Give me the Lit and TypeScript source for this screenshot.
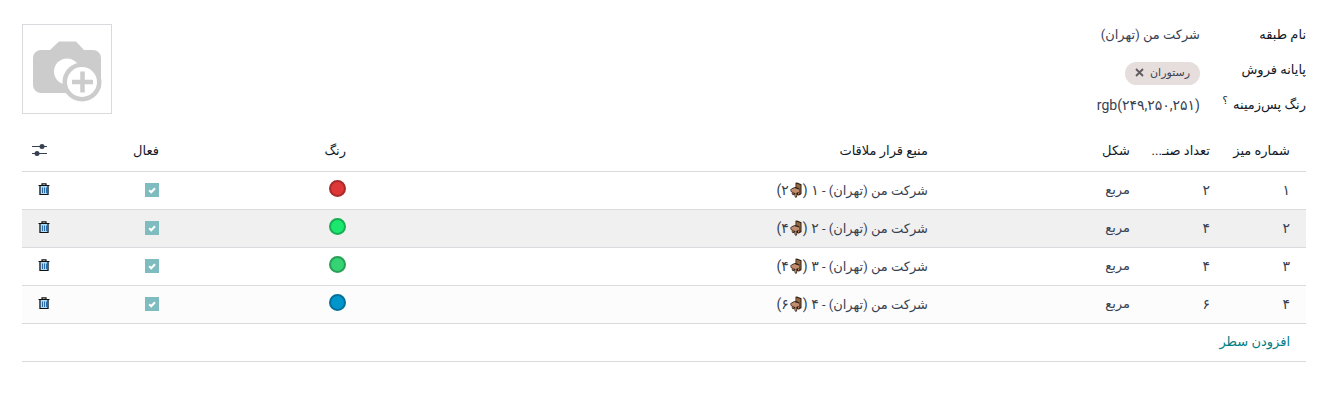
import { LitElement, html, css, svg } from "lit";
import { customElement, state } from "lit/decorators.js";

interface TableRow {
  id: number;
  number: string;
  seats: string;
  shape: string;
  fill: string;
  ring: string;
}

const chair = svg`<svg class="chair" viewBox="0 0 12 16" aria-label="صندلی" role="img">
    <path d="M5.500.8 7 .5l4.500 1.800V12l-2 1.200-1 .3-1.200-.6-.3 2.300-1.500.6-1-1.500V12.600L3 13.200 1.800 12V10.300L.5 9.300V7.200l3-1.700 2-.6z" fill="#2a1c12" />
    <path d="M6.300 1.500 10.500 3v8.200l-1.100.4V6.400L6.300 5.200z" fill="#946a42" />
    <path d="M1.200 7.600 4.400 5.900l4.700 1.500v2.300L5.500 11.300 1.200 9.200z" fill="#c38e70" />
    <path d="M4.800 11.200h1.700v3.500H5.200zM2.400 10.300h1.200v1.900H2.400zM8 10.400h1.200v2H8z" fill="#b5805f" />
  </svg>`;

@customElement("app-root")
export class AppRoot extends LitElement {
  static styles = css`
    :host {
      display: block;
      direction: rtl;
      padding: 24px 24px 24px 22px;
      background: #fff;
      color: #374151;
      font-family: Roboto, "DejaVu Sans", sans-serif;
      font-size: 13px;
      line-height: 20px;
    }
    .top {
      display: flex;
      justify-content: space-between;
      align-items: flex-start;
    }
    .fields {
      display: grid;
      grid-template-columns: 90px minmax(0, 240px);
      column-gap: 16px;
      row-gap: 15px;
      align-items: center;
      padding-top: 1px;
    }
    label,
    .label {
      color: #111827;
      white-space: nowrap;
      font-weight: 400;
    }
    sup {
      margin-right: 2px;
      font-size: 10px;
      line-height: 1;
    }
    .field {
      box-sizing: border-box;
      width: 100%;
      height: 20px;
      padding: 0;
      border: 0;
      background: none;
      color: inherit;
      font: inherit;
      text-align: right;
    }
    .code,
    .digits {
      font-size: 14px;
    }
    .tags {
      display: flex;
      align-items: flex-start;
      box-sizing: border-box;
      height: 20px;
      padding-top: 2px;
    }
    .tag {
      display: inline-flex;
      align-items: center;
      gap: 6px;
      height: 23px;
      padding: 0 10px;
      border-radius: 12px;
      background: #e6dddd;
      font-size: 11px;
      line-height: 18px;
      padding-bottom: 2px;
      box-sizing: border-box;
    }
    button {
      padding: 0;
      border: 0;
      background: none;
      color: inherit;
      font: inherit;
      cursor: pointer;
      display: flex;
    }
    .upload {
      box-sizing: border-box;
      width: 90px;
      height: 90px;
      border: 1px solid #d8dadd;
    }
    svg {
      display: block;
    }
    table {
      width: 100%;
      margin-top: 14px;
      border-collapse: collapse;
      table-layout: fixed;
    }
    th,
    td {
      box-sizing: border-box;
      height: 38px;
      padding: 0 5px;
      border-bottom: 1px solid #d8dadd;
      text-align: right;
      font-weight: 400;
      white-space: nowrap;
    }
    th {
      height: 42px;
      padding-top: 2px;
      color: #111827;
    }
    th:first-child,
    td:first-child {
      padding-right: 16px;
    }
    .c-number { width: 91px; }
    .c-seats { width: 80px; }
    .c-shape { width: 202px; }
    .c-color { width: 187px; }
    .c-active { width: 107px; }
    .c-tools { width: 35px; }
    th.c-tools {
      padding-right: 10px;
    }
    td.c-tools {
      padding-right: 7px;
    }
    .hovered td { background: #f0f0f0; }
    .striped td { background: #fcfcfc; }
    .chair {
      display: inline-block;
      width: 12px;
      height: 16px;
      margin: 0 1px;
      vertical-align: -3px;
    }
    .dot {
      display: block;
      box-sizing: border-box;
      width: 17px;
      height: 17px;
      margin-bottom: 3px;
      border: 2px solid;
      border-radius: 50%;
    }
    .check {
      appearance: none;
      display: block;
      width: 14px;
      height: 14px;
      margin: 0;
      background: #7fbcc0
        url("data:image/svg+xml,%3Csvg xmlns='http://www.w3.org/2000/svg' viewBox='0 0 14 14'%3E%3Cpath d='M4.2 7.2l2 2 3.8-4' fill='none' stroke='%23fff' stroke-width='2'/%3E%3C/svg%3E");
    }
    .add {
      color: #017e84;
      text-decoration: none;
    }
  `;

  @state() private rows: TableRow[] = [
    { id: 1, number: "۱", seats: "۲", shape: "مربع", fill: "#dd3737", ring: "#a82a2a" },
    { id: 2, number: "۲", seats: "۴", shape: "مربع", fill: "#1be66d", ring: "#15ae53" },
    { id: 3, number: "۳", seats: "۴", shape: "مربع", fill: "#35d374", ring: "#28a058" },
    { id: 4, number: "۴", seats: "۶", shape: "مربع", fill: "#0096cb", ring: "#00729a" },
  ];

  private removeRow(id: number) {
    this.rows = this.rows.filter((row) => row.id !== id);
  }

  private renderRow(row: TableRow) {
    const tone = row.id === 2 ? "hovered" : row.id === 4 ? "striped" : "";
    return html`
      <tr class=${tone}>
        <td class="digits">${row.number}</td>
        <td class="digits">${row.seats}</td>
        <td>${row.shape}</td>
        <td>شرکت من (تهران) - <span class="digits">${row.number} (${chair}${row.seats})</span></td>
        <td><span class="dot" style="background:${row.fill};border-color:${row.ring}"></span></td>
        <td><input class="check" type="checkbox" aria-label="فعال" checked disabled /></td>
        <td class="c-tools">
          <button aria-label="حذف" @click=${() => this.removeRow(row.id)}>
            <svg width="12" height="14" viewBox="0 0 12 14">
              <path d="M1 3h10v9H1z" fill="#a9dcfb" />
              <path d="M.5 2.500h11M4 2V.8h4V2M2 3v8.500h8V3" fill="none" stroke="#111" stroke-width="1.200" />
              <path d="M4.500 4.500v5.500M6.500 4.500v5.500M8.500 4.500v5.500" stroke="#2a6cab" stroke-width="1" />
            </svg>
          </button>
        </td>
      </tr>`;
  }

  render() {
    return html`
      <div class="top">
        <div class="fields">
          <label for="name">نام طبقه</label>
          <input id="name" class="field" value="شرکت من (تهران)" />
          <span class="label">پایانه فروش</span>
          <div class="tags">
            <span class="tag">
              رستوران
              <button aria-label="حذف">
                <svg width="9" height="9" viewBox="0 0 9 9">
                  <path d="M1 1l7 7M8 1L1 8" stroke="#5f5b5e" stroke-width="1.800" />
                </svg>
              </button>
            </span>
          </div>
          <label for="color">رنگ پس‌زمینه <sup>؟</sup></label>
          <input id="color" class="field code" dir="ltr" value="rgb(۲۴۹,۲۵۰,۲۵۱)" />
        </div>
        <button class="upload" aria-label="بارگذاری تصویر">
          <svg width="88" height="88" viewBox="0 0 88 88">
            <path d="M36 16.500h17l8 8.500h9a8 8 0 0 1 8 8v27a8 8 0 0 1-8 8H18a8 8 0 0 1-8-8V33a8 8 0 0 1 8-8h9z" fill="#ccc" />
            <circle cx="44" cy="46.500" r="13" fill="#fff" />
            <circle cx="59" cy="57" r="19.500" fill="#ccc" />
            <circle cx="59" cy="57" r="15" fill="#fff" />
            <path d="M59.500 46.500v21M49 57h21" stroke="#ccc" stroke-width="4.500" />
          </svg>
        </button>
      </div>
      <table>
        <thead>
          <tr>
            <th class="c-number">شماره میز</th>
            <th class="c-seats">تعداد صنـ...</th>
            <th class="c-shape">شکل</th>
            <th>منبع قرار ملاقات</th>
            <th class="c-color">رنگ</th>
            <th class="c-active">فعال</th>
            <th class="c-tools">
              <button aria-label="ستون‌های اختیاری">
                <svg width="15" height="13" viewBox="0 0 15 13" fill="#374151">
                  <path d="M0 2h15v1H0zM0 9h15v1H0z" />
                  <circle cx="10" cy="2.500" r="2.500" />
                  <circle cx="5" cy="9.500" r="2.500" />
                </svg>
              </button>
            </th>
          </tr>
        </thead>
        <tbody>
          ${this.rows.map((row) => this.renderRow(row))}
          <tr>
            <td colspan="7"><a class="add" href="#">افزودن سطر</a></td>
          </tr>
        </tbody>
      </table>
    `;
  }
}
